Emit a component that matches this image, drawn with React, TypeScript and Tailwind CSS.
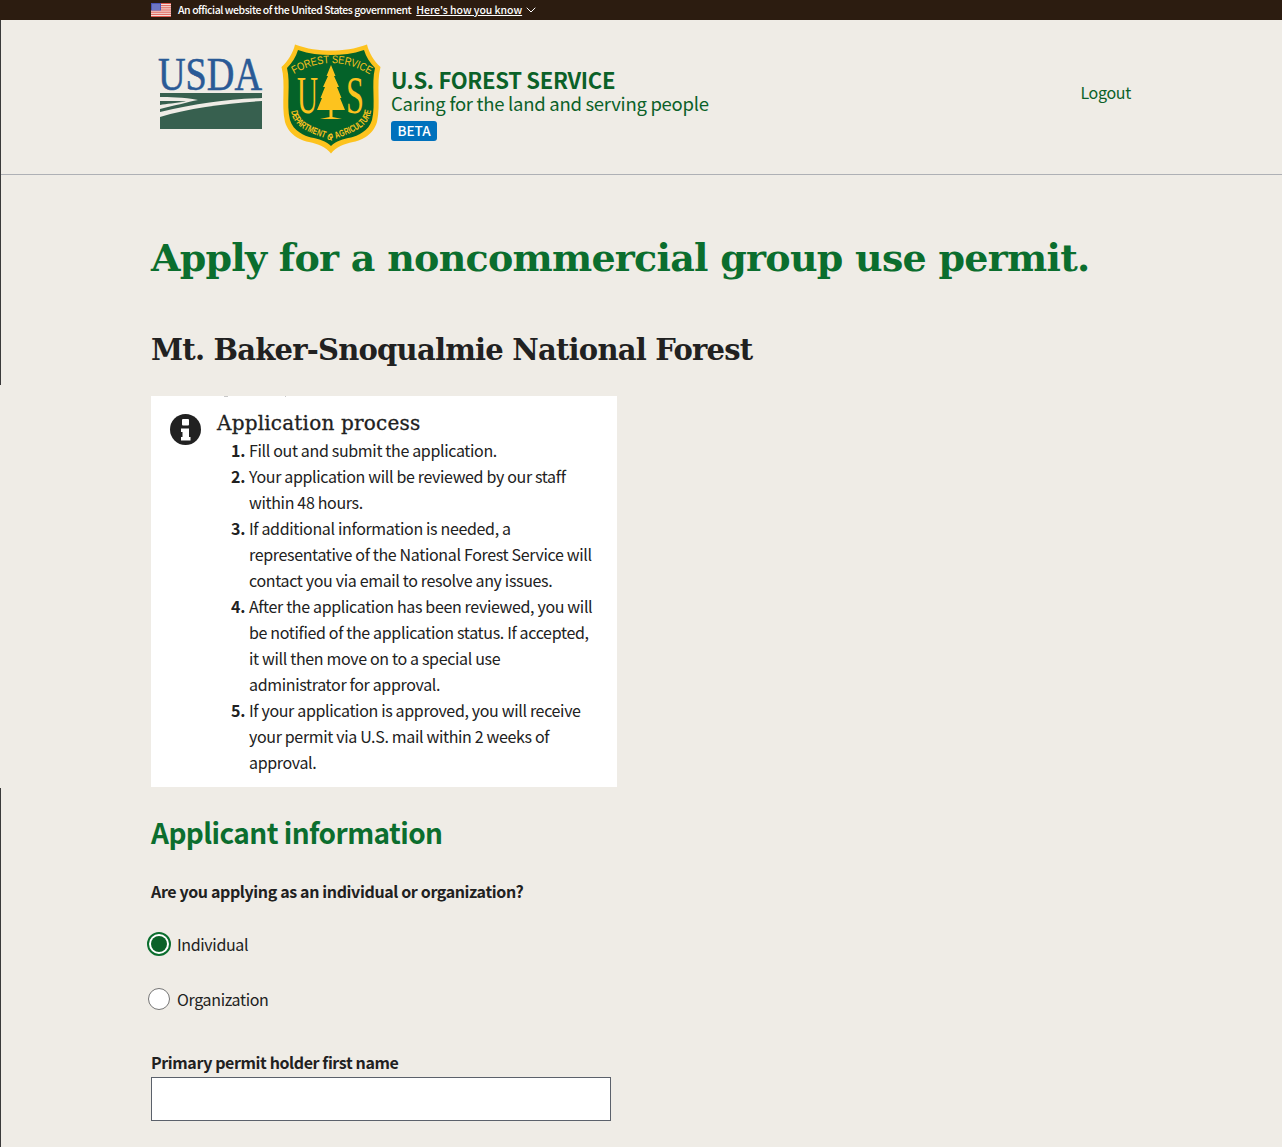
import { ChevronDown } from "lucide-react";

const sans = { fontFamily: '"Noto Sans CJK SC", "Noto Sans", sans-serif' };
const serif = { fontFamily: '"DejaVu Serif", "Liberation Serif", serif' };

const UsFlag = () => (
  <svg width="20" height="14" viewBox="0 0 20 14" className="shrink-0">
    <rect width="20" height="14" fill="#f6efec" />
    {[0, 2.15, 4.3, 6.45, 8.6, 10.75, 12.9].map((y) => (
      <rect key={y} y={y} width="20" height="1.1" fill="#e0584c" />
    ))}
    <rect width="10" height="7.5" fill="#4a55b5" />
    {[1.5, 3.5, 5.5].map((y) =>
      [1.5, 3.5, 5.5, 7.5].map((x) => (
        <rect key={`${x}-${y}`} x={x} y={y} width="1" height="1" fill="#d8dcf2" />
      )),
    )}
  </svg>
);

const UsdaLogo = () => (
  <svg width="106" height="73" viewBox="0 0 106 73" className="shrink-0">
    <text
      x="0"
      y="32"
      fontFamily="Liberation Serif"
      fontSize="47"
      fill="#2a5a96"
      stroke="#2a5a96"
      strokeWidth="0.6"
      textLength="104"
      lengthAdjust="spacingAndGlyphs"
    >
      USDA
    </text>
    <path d="M2 59 C30 50 70 45 104 43 V71 H2 Z" fill="#37604f" />
    <path d="M2 35 H104 V40 C70 41 40 45 2 54 V51 C15 48 30 44 40 42 C26 39 10 39 2 39 Z" fill="#37604f" />
    <path d="M2 43 C12 43 25 43 28 43.5 C18 45 8 46 2 47 Z" fill="#37604f" />
  </svg>
);

const ForestShield = () => (
  <svg width="100" height="110" viewBox="0 0 100 110" className="shrink-0">
    <path
      d="M14 0.5 C26 5 38 6.5 50 6.5 C62 6.5 74 5 86 0.5 C88 9 93 17 99.5 23 C95 40 100 60 96 78 C92 92 78 97 72 98 C63 100 55 103 50 109.5 C45 103 37 100 28 98 C22 97 8 92 4 78 C0 60 5 40 0.5 23 C7 17 12 9 14 0.5 Z"
      fill="#fdc31e"
    />
    <path
      d="M17 6 C28 10 39 11 50 11 C61 11 72 10 83 6 C85 13 89 19 94 24 C90 40 95 60 91 76 C88 87 76 92 70 93.5 C62 95 55 97 50 102 C45 97 38 95 30 93.5 C24 92 12 87 9 76 C5 60 10 40 6 24 C11 19 15 13 17 6 Z"
      fill="#046229"
    />
    <defs>
      <path id="shield-top" d="M13 30 Q50 8 88 30" />
      <path id="shield-bottom" d="M10 67 C13 87 34 89 50 97 C66 89 87 87 90 67" />
    </defs>
    <text fontFamily="Liberation Sans" fontSize="11" fill="#fdc31e">
      <textPath href="#shield-top" textLength="80" lengthAdjust="spacingAndGlyphs">
        FOREST SERVICE
      </textPath>
    </text>
    <text fontFamily="Liberation Sans" fontWeight="700" fontSize="9.5" fill="#fdc31e">
      <textPath href="#shield-bottom" textLength="106" lengthAdjust="spacingAndGlyphs">
        DEPARTMENT OF AGRICULTURE
      </textPath>
    </text>
    <text x="16" y="69" fontFamily="Liberation Serif" fontSize="53" fill="#fdc31e" textLength="21" lengthAdjust="spacingAndGlyphs">
      U
    </text>
    <text x="65" y="69" fontFamily="Liberation Serif" fontSize="53" fill="#fdc31e" textLength="18" lengthAdjust="spacingAndGlyphs">
      S
    </text>
    <path
      d="M50 21 L54.5 32 L53 32 L58 43 L56 43 L60.5 54 L59 54 L64 66 L51.5 66 V73 L61 75 H39 L48.5 73 V66 L36 66 L41 54 L39.5 54 L44 43 L42 43 L47 32 L45.5 32 Z"
      fill="#fdc31e"
    />
  </svg>
);

const InfoIcon = () => (
  <svg width="31" height="31" viewBox="0 0 31 31" className="shrink-0">
    <circle cx="15.5" cy="15.5" r="15.5" fill="#212121" />
    <rect x="12" y="5" width="7" height="6.5" rx="1" fill="#fff" />
    <path d="M11 14.5 H19 V23 H20.5 V26.5 H11 V23 H12.5 V18 H11 Z" fill="#fff" />
  </svg>
);

const steps = [
  <>Fill out and submit the application.</>,
  <>
    Your application will be reviewed by our staff
    <br />
    within 48 hours.
  </>,
  <>
    If additional information is needed, a
    <br />
    representative of the National Forest Service will
    <br />
    contact you via email to resolve any issues.
  </>,
  <>
    After the application has been reviewed, you will
    <br />
    be notified of the application status. If accepted,
    <br />
    it will then move on to a special use
    <br />
    administrator for approval.
  </>,
  <>
    If your application is approved, you will receive
    <br />
    your permit via U.S. mail within 2 weeks of
    <br />
    approval.
  </>,
];

export default function App() {
  return (
    <div className="relative h-[1147px] overflow-hidden bg-[#efece6] text-[#212121]" style={sans}>
      {/* window edge left over in the capture */}
      <div className="absolute left-0 top-[20px] h-[365px] w-px bg-[#3a3a3a]" />
      <div className="absolute left-0 top-[788px] h-[359px] w-px bg-[#3a3a3a]" />

      <div className="flex h-5 items-center bg-[#2c1c10] pl-[151px] text-white">
        <UsFlag />
        <span className="ml-[7px] text-[10.5px] font-medium leading-none tracking-[-0.44px]">
          An official website of the United States government
        </span>
        <a className="ml-[5px] text-[10.5px] font-medium leading-none tracking-[-0.05px] underline">Here's how you know</a>
        <ChevronDown className="ml-[1px] h-[16px] w-[16px]" strokeWidth={1.5} />
      </div>

      <header className="flex h-[155px] items-start border-b border-[#aeb0b5] pl-[158px] pr-[151px]">
        <div className="mt-[38px]">
          <UsdaLogo />
        </div>
        <div className="ml-[17px] mt-[24px]">
          <ForestShield />
        </div>
        <div className="ml-[10px] mt-[45px] flex flex-col items-start">
          <div className="text-[22px] font-bold leading-[28px] tracking-[-0.3px] text-[#0b6128]">U.S. FOREST SERVICE</div>
          <div className="text-[18.5px] leading-[20px] tracking-[-0.28px] text-[#0b6128]">
            Caring for the land and serving people
          </div>
          <div className="mt-[8px] flex h-5 w-[46px] items-center justify-center rounded-[3px] bg-[#0071bc] text-[13.5px] font-medium leading-none text-white">
            BETA
          </div>
        </div>
        <a className="ml-auto mt-[60px] text-[16px] leading-[24px] tracking-[-0.3px] text-[#0b6128]">Logout</a>
      </header>

      <main className="pl-[151px]">
        <h1 className="mt-[54px] text-[38px] font-bold leading-[58px] tracking-[-0.75px] text-[#0b6e2e]" style={serif}>
          Apply for a noncommercial group use permit.
        </h1>
        <h2 className="mt-[43px] text-[29px] font-bold leading-[40px] tracking-[-0.78px] text-[#212121]" style={serif}>
          Mt. Baker-Snoqualmie National Forest
        </h2>

        <section className="relative mt-[26px] flex h-[391px] w-[466px] bg-white pl-[19px] pt-[18px]">
          <span className="absolute left-[73px] top-0 h-px w-1 bg-[#c9c9c9]" />
          <span className="absolute left-[134px] top-0 h-px w-px bg-[#c9c9c9]" />
          <InfoIcon />
          <div className="ml-[16px] -mt-[9px]">
            <h3
              className="text-[20px] leading-[36px] tracking-[0.2px] text-[#212121] [-webkit-text-stroke:0.3px_#212121]"
              style={serif}
            >
              Application process
            </h3>
            <ol className="-mt-[4px] text-[16px] leading-[26px] tracking-[-0.34px]">
              {steps.map((step, i) => (
                <li key={i} className="flex">
                  <span className="w-[32px] shrink-0 pr-[4px] text-right font-bold">{i + 1}.</span>
                  <span className="whitespace-nowrap">{step}</span>
                </li>
              ))}
            </ol>
          </div>
        </section>

        <h3 className="mt-[25px] text-[28px] font-bold leading-[40px] tracking-[-0.57px] text-[#0b6e2e]">
          Applicant information
        </h3>
        <p className="mt-[27px] text-[16px] font-bold leading-[24px] tracking-[-0.37px]">
          Are you applying as an individual or organization?
        </p>

        <div className="-ml-[4px] mt-[29px] flex h-6 items-center gap-[6px] text-[16px] tracking-[-0.35px]">
          <span className="flex h-6 w-6 items-center justify-center rounded-full border-2 border-[#0b6e2e] bg-white">
            <span className="h-[16px] w-[16px] rounded-full bg-[#0b6128]" />
          </span>
          <span className="leading-[24px]">Individual</span>
        </div>
        <div className="-ml-[4px] mt-[31px] flex h-6 items-center gap-[6px] text-[16px] tracking-[-0.35px]">
          <span className="mx-px h-[22px] w-[22px] rounded-full border border-[#757575] bg-white" />
          <span className="leading-[24px]">Organization</span>
        </div>

        <label className="mt-[39px] block text-[16px] font-bold leading-[24px] tracking-[-0.4px]">
          Primary permit holder first name
        </label>
        <input className="mt-[3px] block h-[44px] w-[460px] border border-[#5b616b] bg-white" />
      </main>
    </div>
  );
}
